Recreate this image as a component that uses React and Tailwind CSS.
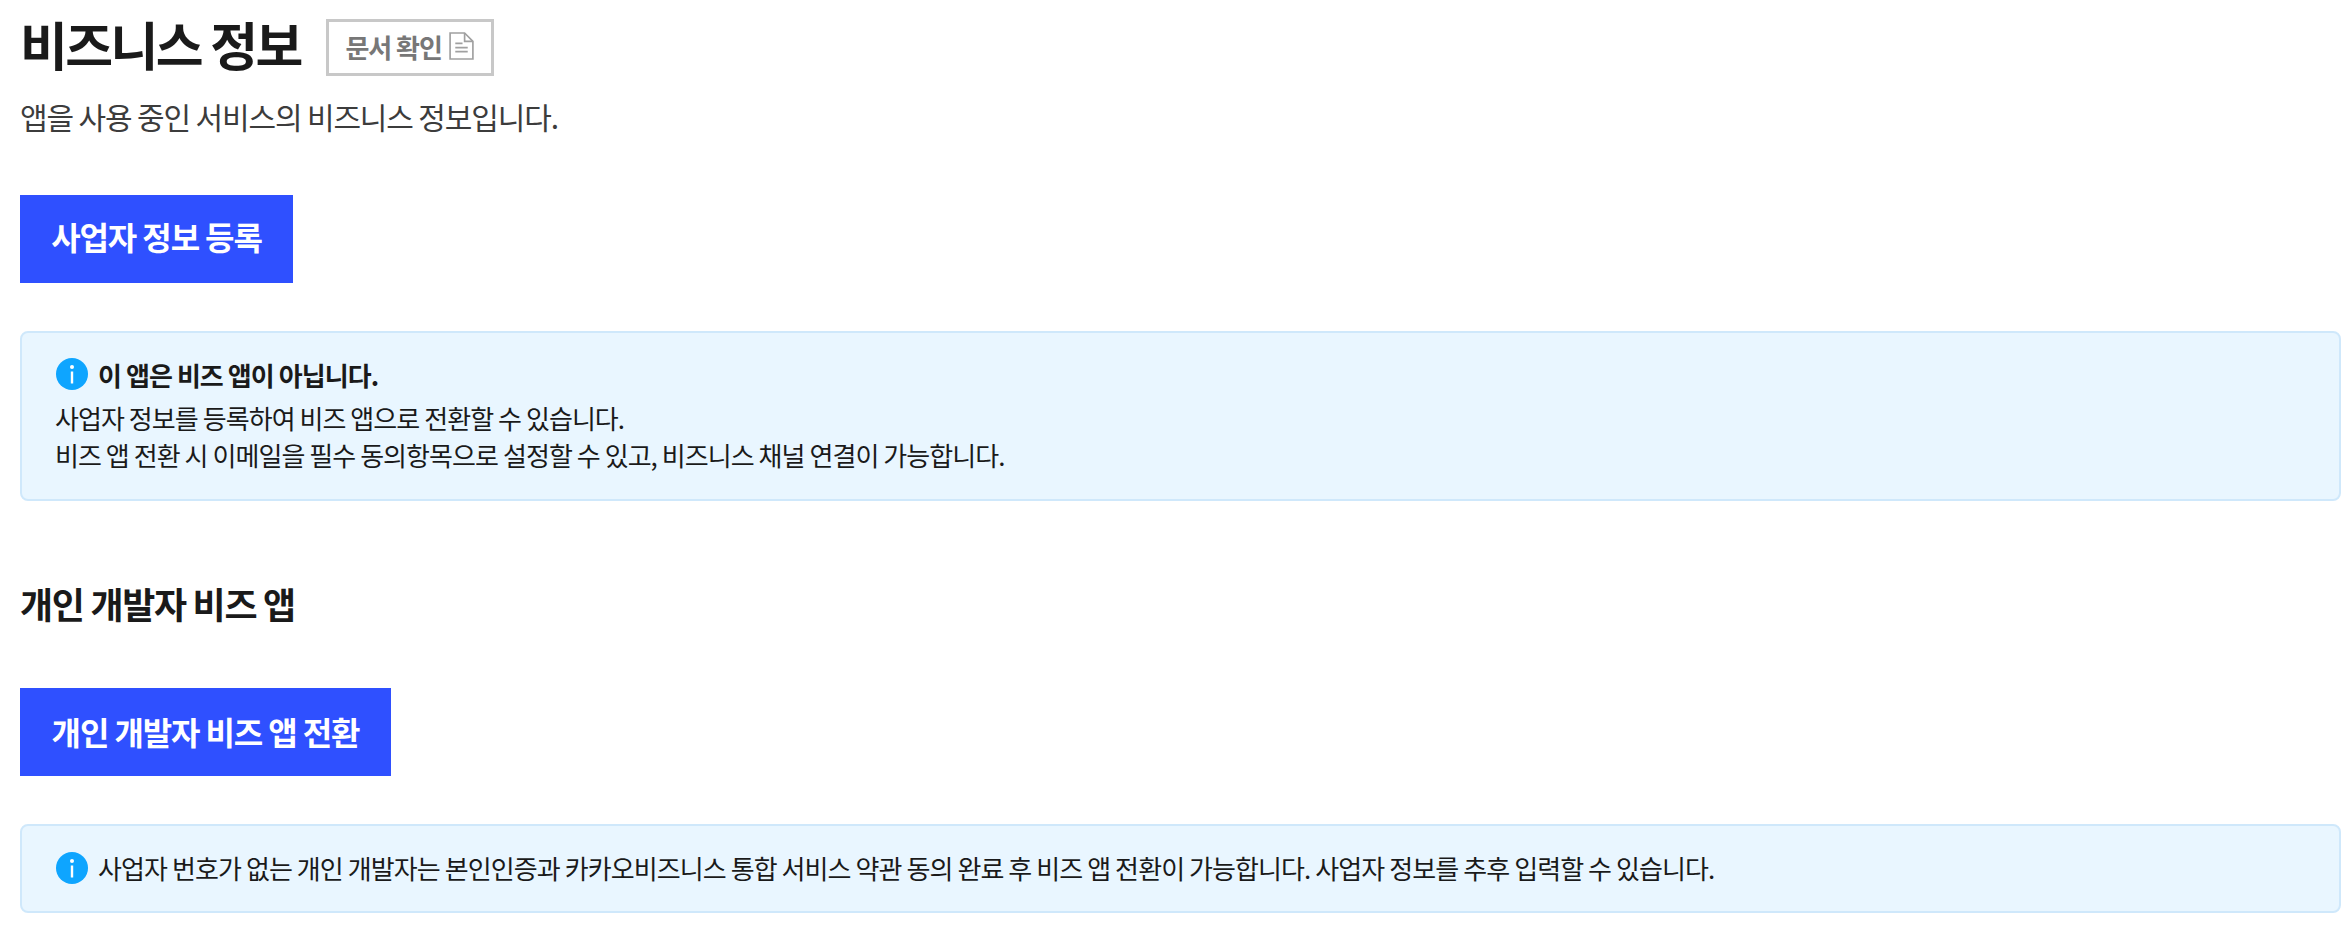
const FONT = "font-['Noto_Sans_CJK_KR','Noto_Sans',sans-serif]";

function InfoIcon() {
  return (
    <svg viewBox="0 0 32 32" className="w-[32px] h-[32px] shrink-0">
      <circle cx="16" cy="16" r="16" fill="#0ea5ff" />
      <circle cx="16" cy="9" r="2" fill="#fff" />
      <rect x="14.8" y="13.5" width="2.4" height="12" fill="#fff" />
    </svg>
  );
}

function DocIcon() {
  return (
    <svg viewBox="0 0 24 27" className="w-[25px] h-[28px] shrink-0" fill="none" stroke="#a0a0a0" strokeWidth="1.6">
      <path d="M1 1h14l8 8v17H1z" />
      <path d="M15 1v8h8" />
      <path d="M6 11h7M6 15h12M6 19h12" />
    </svg>
  );
}

export default function App() {
  return (
    <div className={`${FONT} w-[2350px] h-[940px] bg-white pl-[20px] pr-[9px] overflow-hidden`}>
      {/* Title */}
      <div className="flex items-center h-[94px]">
        <h1 className="text-[52px] leading-[88px] pb-[6px] font-bold text-[#1a1a1a] tracking-[-0.05em]">비즈니스 정보</h1>
        <button className="ml-[25px] w-[168px] h-[57px] border-[3px] border-[#c8c8c8] flex items-center justify-center gap-[7px] pb-[2px] text-[26px] font-bold text-[#777] tracking-[-0.04em]">
          문서 확인
          <DocIcon />
        </button>
      </div>
      <p className="mt-[2px] text-[30px] leading-[40px] text-[#3c3c3c] tracking-[-0.038em]">앱을 사용 중인 서비스의 비즈니스 정보입니다.</p>

      <button className="mt-[59px] w-[273px] h-[88px] pb-[7px] bg-[#2f50ff] text-white text-[32px] font-bold tracking-[-0.035em]">사업자 정보 등록</button>

      {/* Notice */}
      <div className="mt-[48px] h-[170px] rounded-[8px] border-[2px] border-[#cfe8fb] bg-[#e9f6ff] pl-[33px] pt-[21px] text-[26px] text-[#1a1a1a] tracking-[-0.036em]">
        <div className="flex items-center gap-[10px] pl-[1px] h-[40px] font-bold">
          <InfoIcon />
          이 앱은 비즈 앱이 아닙니다.
        </div>
        <p className="leading-[37px] mt-[5px]">
          사업자 정보를 등록하여 비즈 앱으로 전환할 수 있습니다.
          <br />
          비즈 앱 전환 시 이메일을 필수 동의항목으로 설정할 수 있고, 비즈니스 채널 연결이 가능합니다.
        </p>
      </div>

      <h2 className="mt-[77px] text-[36px] leading-[50px] font-bold text-[#1a1a1a] tracking-[-0.037em]">개인 개발자 비즈 앱</h2>

      <button className="mt-[60px] w-[371px] h-[88px] pb-[3px] bg-[#2f50ff] text-white text-[32px] font-bold tracking-[-0.035em]">개인 개발자 비즈 앱 전환</button>

      <div className="mt-[48px] h-[89px] rounded-[8px] border-[2px] border-[#cfe8fb] bg-[#e9f6ff] pl-[34px] flex items-center gap-[10px] pb-[2px] text-[26px] text-[#1a1a1a] tracking-[-0.035em]">
        <InfoIcon />
        사업자 번호가 없는 개인 개발자는 본인인증과 카카오비즈니스 통합 서비스 약관 동의 완료 후 비즈 앱 전환이 가능합니다. 사업자 정보를 추후 입력할 수 있습니다.
      </div>
    </div>
  );
}
